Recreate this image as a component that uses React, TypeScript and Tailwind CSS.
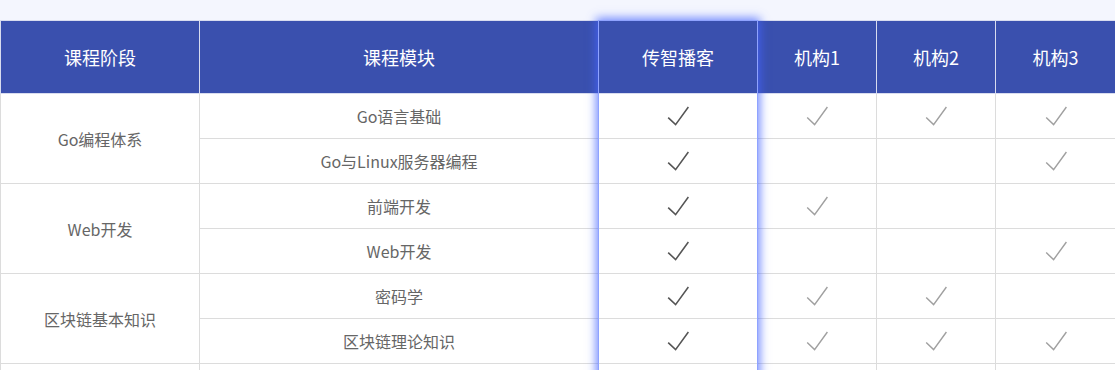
import React from 'react';

type Mark = [boolean, boolean, boolean, boolean];

interface Stage {
  name: string;
  modules: { name: string; marks: Mark }[];
}

const STAGES: Stage[] = [
  {
    name: 'Go编程体系',
    modules: [
      { name: 'Go语言基础', marks: [true, true, true, true] },
      { name: 'Go与Linux服务器编程', marks: [true, false, false, true] },
    ],
  },
  {
    name: 'Web开发',
    modules: [
      { name: '前端开发', marks: [true, true, false, false] },
      { name: 'Web开发', marks: [true, false, false, true] },
    ],
  },
  {
    name: '区块链基本知识',
    modules: [
      { name: '密码学', marks: [true, true, true, false] },
      { name: '区块链理论知识', marks: [true, true, true, true] },
    ],
  },
];

const HEADERS = ['课程阶段', '课程模块', '传智播客', '机构1', '机构2', '机构3'];
const WIDTHS = ['w-[199px]', 'w-[399px]', 'w-[159px]', 'w-[119px]', 'w-[119px]', 'w-[120px]'];

function Check({ dark }: { dark: boolean }) {
  return (
    <svg width="22" height="20" viewBox="0 0 22 20" className="mx-auto block">
      <path
        d="M1.2 11.6 L8.6 18.6 L21.4 1"
        fill="none"
        stroke={dark ? '#555555' : '#a0a0a0'}
        strokeWidth={dark ? 1.6 : 1.4}
        strokeLinejoin="miter"
      />
    </svg>
  );
}

export default function App() {
  return (
    <div
      className="min-h-screen bg-[#f4f6fe] pt-5 overflow-hidden"
      style={{ fontFamily: '"Microsoft YaHei", "Noto Sans CJK SC", "Noto Sans", sans-serif' }}
    >
      <div className="relative w-[1116px]">
        <table className="w-[1116px] table-fixed border-collapse bg-white">
          <colgroup>
            {WIDTHS.map((w, i) => (
              <col key={i} className={w} />
            ))}
          </colgroup>
          <thead>
            <tr className="h-[73px] bg-[#3a50ae]">
              {HEADERS.map((h) => (
                <th
                  key={h}
                  className="border border-[#d8dcef] text-[18px] font-normal text-white text-center align-middle"
                >
                  {h}
                </th>
              ))}
            </tr>
          </thead>
          <tbody>
            {STAGES.map((stage) =>
              stage.modules.map((m, mi) => (
                <tr key={stage.name + m.name} className="h-[45px]">
                  {mi === 0 && (
                    <td
                      rowSpan={stage.modules.length}
                      className="border border-[#dcdcdc] text-center text-[16px] text-[#666]"
                    >
                      {stage.name}
                    </td>
                  )}
                  <td className="border border-[#dcdcdc] text-center text-[16px] text-[#666]">{m.name}</td>
                  {m.marks.map((on, ci) => (
                    <td key={ci} className="border border-[#dcdcdc] text-center">
                      {on && <Check dark={ci === 0} />}
                    </td>
                  ))}
                </tr>
              ))
            )}
            {/* 次の段（画面外） */}
            <tr className="h-[45px]">
              {WIDTHS.map((_, i) => (
                <td key={i} className="border border-[#dcdcdc]" />
              ))}
            </tr>
          </tbody>
        </table>
        {/* 传智播客列のハイライト */}
        <div className="pointer-events-none absolute left-[598px] top-0 h-[400px] w-[160px] border border-[#8fa3ff] shadow-[0_0_9px_2px_rgba(70,100,255,0.75)]" />
      </div>
    </div>
  );
}
